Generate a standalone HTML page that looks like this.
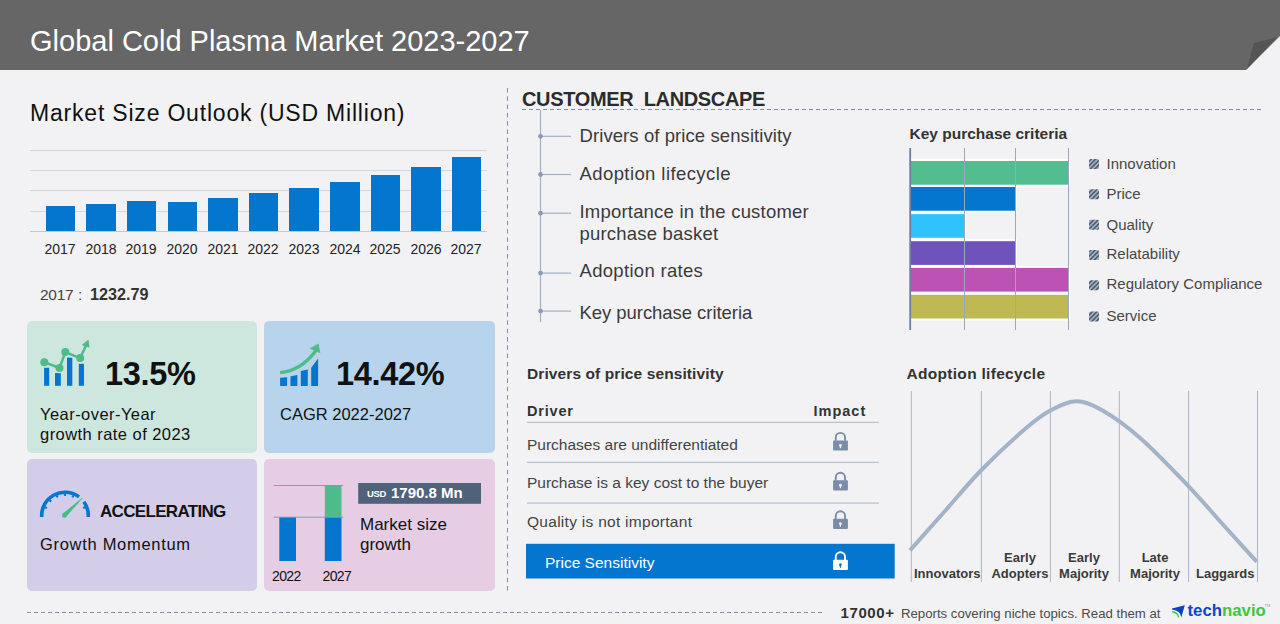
<!DOCTYPE html>
<html><head><meta charset="utf-8">
<style>
*{margin:0;padding:0;box-sizing:border-box}
html,body{width:1280px;height:624px;overflow:hidden;background:#f2f2f4;font-family:"Liberation Sans",sans-serif;color:#222}
.a{position:absolute;white-space:nowrap}
#hdr{position:absolute;left:0;top:0;width:1280px;height:70px}
.title{left:30px;top:23.5px;font-size:29px;color:#fff;line-height:34px;letter-spacing:0px}
.mso{left:30px;top:98.5px;font-size:23px;color:#111;line-height:28px;letter-spacing:0.8px}
.grid{position:absolute;left:30px;width:457px;height:1px;background:#d6d7dc}
.bar{position:absolute;background:#0476d0;width:29.5px}
.yr{position:absolute;top:241px;font-size:14px;color:#222;width:40px;text-align:center;line-height:16px}
.card{position:absolute;border-radius:5px}
.leg{left:1106.5px;font-size:15px;line-height:18px;color:#474747}
.row{left:527px;font-size:15.5px;line-height:18px;color:#444}
.lc{font-size:13px;line-height:16px;font-weight:bold;color:#3a3a3a}
</style></head><body>
<svg id="hdr" width="1280" height="70" viewBox="0 0 1280 70">
<polygon points="0,0 1280,0 1280,36 1246,70 0,70" fill="#666666"/>
<polygon points="1254,43 1277,37 1247,69" fill="#555555"/>
</svg>
<div class="a title">Global Cold Plasma Market 2023-2027</div>

<div class="a mso">Market Size Outlook (USD Million)</div>
<div class="grid" style="top:150px"></div>
<div class="grid" style="top:170px"></div>
<div class="grid" style="top:190px"></div>
<div class="grid" style="top:211px"></div>
<div class="grid" style="top:231px;background:#c4c6cc"></div>
<div class="bar" style="left:45.5px;top:206px;height:25px"></div>
<div class="bar" style="left:86px;top:203.5px;height:27.5px"></div>
<div class="bar" style="left:126.5px;top:200.5px;height:30.5px"></div>
<div class="bar" style="left:167.5px;top:201.5px;height:29.5px"></div>
<div class="bar" style="left:208px;top:197.5px;height:33.5px"></div>
<div class="bar" style="left:248.5px;top:193px;height:38px"></div>
<div class="bar" style="left:289px;top:188px;height:43px"></div>
<div class="bar" style="left:330px;top:182px;height:49px"></div>
<div class="bar" style="left:370.5px;top:175px;height:56px"></div>
<div class="bar" style="left:411px;top:166.5px;height:64.5px"></div>
<div class="bar" style="left:451.5px;top:156.5px;height:74.5px"></div>

<div class="yr" style="left:40px">2017</div>
<div class="yr" style="left:81px">2018</div>
<div class="yr" style="left:121px">2019</div>
<div class="yr" style="left:162px">2020</div>
<div class="yr" style="left:203px">2021</div>
<div class="yr" style="left:243px">2022</div>
<div class="yr" style="left:284px">2023</div>
<div class="yr" style="left:325px">2024</div>
<div class="yr" style="left:365px">2025</div>
<div class="yr" style="left:406px">2026</div>
<div class="yr" style="left:446px">2027</div>
<div class="a" style="left:40px;top:285.5px;font-size:15.5px;line-height:18px;letter-spacing:-0.3px;color:#444">2017</div>
<div class="a" style="left:78px;top:285.5px;font-size:15.5px;line-height:18px;color:#444">:</div>
<div class="a" style="left:90px;top:284.5px;font-size:16.2px;line-height:18px;font-weight:bold;color:#333">1232.79</div>

<div class="card" style="left:27px;top:321px;width:230px;height:131.5px;background:#cde6de"></div>
<div class="card" style="left:264px;top:321px;width:231px;height:131.5px;background:#b8d4ec"></div>
<div class="card" style="left:27px;top:459px;width:230px;height:131.5px;background:#d3cde9"></div>
<div class="card" style="left:264px;top:459px;width:231px;height:131.5px;background:#e6cde3"></div>

<svg class="a" style="left:0;top:0" width="520" height="624" viewBox="0 0 520 624">
 <g fill="#0476d0">
  <rect x="44.1" y="367.7" width="5.1" height="18.1"/>
  <rect x="55" y="373" width="5.8" height="12.8"/>
  <rect x="67" y="357.6" width="5.3" height="28.2"/>
  <rect x="78.8" y="363.8" width="5.2" height="22"/>
 </g>
 <polyline points="44.3,362.2 59.5,368 65.3,352.1 80.2,358.1 86,345.5" stroke="#cde6de" stroke-width="5" fill="none" stroke-linejoin="round"/>
 <g fill="#cde6de">
  <circle cx="44.3" cy="362.2" r="5.2"/><circle cx="59.5" cy="368" r="5.2"/>
  <circle cx="65.3" cy="352.1" r="5.2"/><circle cx="80.2" cy="358.1" r="5.2"/>
 </g>
 <polyline points="44.3,362.2 59.5,368 65.3,352.1 80.2,358.1 86,345.5" stroke="#4dbb8a" stroke-width="2.5" fill="none" stroke-linejoin="round"/>
 <g fill="#4dbb8a">
  <circle cx="44.3" cy="362.2" r="4"/><circle cx="59.5" cy="368" r="4"/>
  <circle cx="65.3" cy="352.1" r="4"/><circle cx="80.2" cy="358.1" r="4"/>
  <polygon points="88.5,339.6 89.5,347.8 81.8,345"/>
 </g>
 <g fill="#0476d0">
  <polygon points="280.1,377.8 287.1,377.3 287.1,385.9 280.1,385.9"/>
  <polygon points="290.5,376.3 297.4,374.9 297.4,385.9 290.5,385.9"/>
  <polygon points="300.8,371 307.8,369.6 307.8,385.9 300.8,385.9"/>
  <polygon points="311.2,367.7 318.1,358.6 318.1,385.9 311.2,385.9"/>
 </g>
 <path d="M280.1,372.6 C293,371.5 306,364 315.8,350.8" stroke="#4dbb8a" stroke-width="3.4" fill="none"/>
 <polygon points="318.6,343.5 320.3,353.3 309.6,348.6" fill="#4dbb8a"/>
 <!-- gauge -->
 <path d="M41.75,517.00 A23.3,23.3 0 0 1 79.02,496.89 M83.85,501.80 A23.3,23.3 0 0 1 88.25,517.00" stroke="#0476d0" stroke-width="3.6" fill="none"/>
 <g stroke="#0476d0" stroke-width="2.2"><line x1="44.86" y1="507.16" x2="46.89" y2="508.00"/><line x1="49.59" y1="500.09" x2="51.14" y2="501.64"/><line x1="56.66" y1="495.36" x2="57.50" y2="497.39"/><line x1="65.00" y1="493.70" x2="65.00" y2="495.90"/><line x1="73.34" y1="495.36" x2="72.50" y2="497.39"/><line x1="85.14" y1="507.16" x2="83.11" y2="508.00"/></g>
 <circle cx="64.3" cy="515.4" r="2.3" fill="#3fbf82"/>
 <polygon points="65.9,517.0 62.7,513.8 82.6,497.4 83.0,497.8" fill="#3fbf82"/>
 <!-- mini chart pink -->
 <line x1="273.7" y1="485.5" x2="343.4" y2="485.5" stroke="#8e9bb8" stroke-width="1"/>
 <rect x="279.3" y="517" width="16.7" height="44" fill="#0476d0"/>
 <rect x="324.8" y="517" width="16.7" height="44" fill="#0476d0"/>
 <rect x="324.8" y="485.5" width="16.7" height="31.5" fill="#4dbb8a"/>
 <line x1="273.7" y1="517.2" x2="343.4" y2="517.2" stroke="#8e9bb8" stroke-width="1"/>
 <rect x="358.2" y="483" width="122.8" height="20.8" fill="#4f6279"/>
</svg>
<div class="a" style="left:105px;top:355.5px;font-size:32.5px;line-height:36px;font-weight:bold;letter-spacing:-0.3px;color:#111">13.5%</div>
<div class="a" style="left:40px;top:404px;font-size:16.5px;line-height:20px;letter-spacing:0.45px;color:#111">Year-over-Year<br>growth rate of 2023</div>
<div class="a" style="left:336px;top:355.5px;font-size:32.5px;line-height:36px;font-weight:bold;letter-spacing:-0.3px;color:#111">14.42%</div>
<div class="a" style="left:280px;top:404px;font-size:16.5px;line-height:20px;color:#111">CAGR 2022-2027</div>
<div class="a" style="left:100px;top:502px;font-size:17px;line-height:20px;font-weight:bold;letter-spacing:-0.68px;color:#111">ACCELERATING</div>
<div class="a" style="left:40px;top:533.5px;font-size:16.5px;line-height:20px;letter-spacing:0.7px;color:#111">Growth Momentum</div>
<div class="a" style="left:272px;top:567.5px;font-size:14px;letter-spacing:-0.6px;line-height:16px;color:#111">2022</div>
<div class="a" style="left:322.5px;top:567.5px;font-size:14px;letter-spacing:-0.6px;line-height:16px;color:#111">2027</div>
<div class="a" style="left:367px;top:488px;font-size:9.5px;line-height:12px;color:#fff;font-weight:bold;letter-spacing:-0.3px">USD</div>
<div class="a" style="left:391px;top:484px;font-size:15px;line-height:18px;color:#fff;font-weight:bold">1790.8 Mn</div>
<div class="a" style="left:360px;top:515px;font-size:17px;line-height:20px;color:#111">Market size<br>growth</div>

<!-- dashed separators -->
<svg class="a" style="left:0;top:0" width="1280" height="624" viewBox="0 0 1280 624">
 <line x1="507.5" y1="88" x2="507.5" y2="592" stroke="#7d8fac" stroke-width="1" stroke-dasharray="4.5 3.8"/>
 <line x1="522" y1="109.5" x2="1262" y2="109.5" stroke="#7d8fac" stroke-width="1" stroke-dasharray="4 3"/>
 <line x1="27" y1="612.5" x2="822" y2="612.5" stroke="#7d8fac" stroke-width="1" stroke-dasharray="4 3"/>
 <!-- tree -->
 <line x1="540.5" y1="110" x2="540.5" y2="322" stroke="#a3b0c4" stroke-width="1.2"/>
 <g stroke="#a3b0c4" stroke-width="1.2">
  <line x1="540" y1="136.3" x2="571" y2="136.3"/>
  <line x1="540" y1="174.5" x2="571" y2="174.5"/>
  <line x1="540" y1="213.2" x2="571" y2="213.2"/>
  <line x1="540" y1="273.1" x2="571" y2="273.1"/>
  <line x1="540" y1="311.1" x2="571" y2="311.1"/>
 </g>
 <g fill="#8a9bb3">
  <circle cx="540.5" cy="136.3" r="2.4"/><circle cx="540.5" cy="174.5" r="2.4"/>
  <circle cx="540.5" cy="213.2" r="2.4"/><circle cx="540.5" cy="273.1" r="2.4"/>
  <circle cx="540.5" cy="311.1" r="2.4"/>
 </g>
 <!-- KPC bars -->
 <g>
 <rect x="910.5" y="159.0" width="159.6" height="27.7" fill="#ffffff"/>
 <rect x="910.5" y="185.0" width="106.5" height="27.7" fill="#ffffff"/>
 <rect x="910.5" y="212.1" width="55.6" height="27.7" fill="#ffffff"/>
 <rect x="910.5" y="239.2" width="106.5" height="27.7" fill="#ffffff"/>
 <rect x="910.5" y="265.9" width="159.6" height="27.7" fill="#ffffff"/>
 <rect x="910.5" y="292.8" width="159.6" height="27.7" fill="#ffffff"/>
 <rect x="910.5" y="161.0" width="157.6" height="23.7" fill="#52bd8f"/>
 <rect x="910.5" y="187.0" width="104.5" height="23.7" fill="#0476d0"/>
 <rect x="910.5" y="214.1" width="53.6" height="23.7" fill="#2ec4fb"/>
 <rect x="910.5" y="241.2" width="104.5" height="23.7" fill="#6f52bb"/>
 <rect x="910.5" y="267.9" width="157.6" height="23.7" fill="#bb52b4"/>
 <rect x="910.5" y="294.8" width="157.6" height="23.7" fill="#bfb954"/>
</g>
 <g stroke="#9aa8be" stroke-width="1">
  <line x1="964.5" y1="148" x2="964.5" y2="330"/>
  <line x1="1015.5" y1="148" x2="1015.5" y2="330"/>
  <line x1="1068.5" y1="148" x2="1068.5" y2="330"/>
 </g>
 <line x1="910.2" y1="148" x2="910.2" y2="330" stroke="#6d7f9c" stroke-width="1.8"/>
 <defs>
  <pattern id="hatch" width="3.2" height="3.2" patternUnits="userSpaceOnUse" patternTransform="rotate(45)">
   <rect width="3.2" height="3.2" fill="#a6b8d0"/><rect width="1.7" height="3.2" fill="#555d6b"/>
  </pattern>
 </defs>
 <g fill="url(#hatch)">
  <rect x="1089" y="159" width="10" height="10" rx="1.5"/>
  <rect x="1089" y="189.2" width="10" height="10" rx="1.5"/>
  <rect x="1089" y="219.8" width="10" height="10" rx="1.5"/>
  <rect x="1089" y="250" width="10" height="10" rx="1.5"/>
  <rect x="1089" y="280.3" width="10" height="10" rx="1.5"/>
  <rect x="1089" y="311.5" width="10" height="10" rx="1.5"/>
 </g>
 <!-- table lines -->
 <g stroke="#b7c3d3" stroke-width="1.2">
  <line x1="527" y1="422.3" x2="879" y2="422.3"/>
  <line x1="527" y1="462.4" x2="879" y2="462.4"/>
  <line x1="527" y1="503.1" x2="879" y2="503.1"/>
 </g>
 <rect x="526" y="543.8" width="368.7" height="34.7" fill="#0476d0"/>
 <defs>
  <g id="lock">
   <path d="M2.95,9 V5.7 A4.65,4.65 0 0 1 12.25,5.7 V9" fill="none" stroke-width="1.9"/>
   <rect x="0.3" y="8.6" width="14.8" height="10.2" rx="0.9" stroke="none"/>
  </g>
 </defs>
 <g fill="#7a8ca8" stroke="#7a8ca8">
  <use href="#lock" x="832.8" y="431.8"/>
  <use href="#lock" x="832.8" y="471.7"/>
  <use href="#lock" x="832.8" y="510.2"/>
 </g>
 <g fill="#ffffff" stroke="#ffffff"><use href="#lock" x="832.8" y="551.2"/></g>
 <g fill="#f2f2f4"><circle cx="840.4" cy="445.3" r="1.4"/><polygon points="839.7,445.6 841.1,445.6 841,448.3 839.8,448.3"/></g>
 <g fill="#f2f2f4"><circle cx="840.4" cy="485.2" r="1.4"/><polygon points="839.7,485.5 841.1,485.5 841,488.2 839.8,488.2"/></g>
 <g fill="#f2f2f4"><circle cx="840.4" cy="523.7" r="1.4"/><polygon points="839.7,524.0 841.1,524.0 841,526.7 839.8,526.7"/></g>
 <g fill="#0476d0"><circle cx="840.4" cy="564.7" r="1.4"/><polygon points="839.7,565.0 841.1,565.0 841,567.7 839.8,567.7"/></g>
 <!-- lifecycle -->
 <g stroke="#a9b5c8" stroke-width="1">
  <line x1="911.3" y1="391" x2="911.3" y2="582"/>
  <line x1="981.4" y1="391" x2="981.4" y2="582"/>
  <line x1="1050.4" y1="391" x2="1050.4" y2="582"/>
  <line x1="1119.3" y1="391" x2="1119.3" y2="582"/>
  <line x1="1188.6" y1="391" x2="1188.6" y2="582"/>
  <line x1="1257.5" y1="391" x2="1257.5" y2="582"/>
 </g>
 <path d="M910.0,550.4 C921.7,537.3 933.1,524.4 945.0,511.0 C956.9,497.6 968.0,483.8 981.4,470.0 C994.8,456.2 1014.1,438.4 1025.6,428.5 C1037.1,418.6 1042.0,415.0 1050.4,410.5 C1058.9,406.0 1067.6,401.3 1076.3,401.3 C1085.0,401.3 1091.8,404.3 1102.6,410.5 C1113.4,416.7 1126.7,426.1 1141.0,438.7 C1155.3,451.3 1175.1,472.2 1188.6,486.3 C1202.1,500.4 1210.7,510.9 1222.0,523.5 C1233.3,536.0 1245.1,548.9 1256.7,561.6" fill="none" stroke="#a3b3c8" stroke-width="4"/>
</svg>
<div class="a" style="left:522px;top:86.5px;font-size:20px;line-height:24px;font-weight:bold;letter-spacing:-0.35px;color:#2b2b2b">CUSTOMER&nbsp; LANDSCAPE</div>
<div class="a" style="left:579.5px;top:125px;font-size:18.5px;line-height:22px;letter-spacing:0.085px;color:#3a3a3a">Drivers of price sensitivity</div>
<div class="a" style="left:579.5px;top:163px;font-size:18.5px;line-height:22px;letter-spacing:0.41px;color:#3a3a3a">Adoption lifecycle</div>
<div class="a" style="left:579.5px;top:201px;font-size:18.5px;line-height:22px;letter-spacing:0.2px;color:#3a3a3a">Importance in the customer<br>purchase basket</div>
<div class="a" style="left:579.5px;top:260px;font-size:18.5px;line-height:22px;letter-spacing:0.31px;color:#3a3a3a">Adoption rates</div>
<div class="a" style="left:579.5px;top:302px;font-size:18.5px;line-height:22px;letter-spacing:-0.05px;color:#3a3a3a">Key purchase criteria</div>

<div class="a" style="left:909.5px;top:124.5px;font-size:15.5px;line-height:18px;font-weight:bold;color:#333">Key purchase criteria</div>
<div class="a leg" style="top:155.0px">Innovation</div>
<div class="a leg" style="top:185.0px">Price</div>
<div class="a leg" style="top:215.5px">Quality</div>
<div class="a leg" style="top:245.0px">Relatability</div>
<div class="a leg" style="top:275.0px">Regulatory Compliance</div>
<div class="a leg" style="top:307.0px">Service</div>

<div class="a" style="left:527px;top:365px;font-size:15.5px;line-height:18px;font-weight:bold;letter-spacing:0.1px;color:#333">Drivers of price sensitivity</div>
<div class="a" style="left:527px;top:402px;font-size:14.5px;line-height:18px;font-weight:bold;letter-spacing:0.8px;color:#333">Driver</div>
<div class="a" style="left:813.5px;top:401.5px;font-size:14.5px;line-height:18px;font-weight:bold;letter-spacing:1px;color:#333">Impact</div>
<div class="a row" style="top:436px">Purchases are undifferentiated</div>
<div class="a row" style="top:473.5px">Purchase is a key cost to the buyer</div>
<div class="a row" style="top:512.5px;letter-spacing:0.28px">Quality is not important</div>
<div class="a row" style="left:545px;top:553.5px;color:#fff">Price Sensitivity</div>

<div class="a" style="left:906.5px;top:365px;font-size:15.5px;line-height:18px;font-weight:bold;letter-spacing:0.3px;color:#333">Adoption lifecycle</div>
<div class="a lc" style="left:914px;top:566px">Innovators</div>
<div class="a lc" style="left:990px;top:550px;width:60px;text-align:center">Early<br>Adopters</div>
<div class="a lc" style="left:1054px;top:550px;width:60px;text-align:center">Early<br>Majority</div>
<div class="a lc" style="left:1125px;top:550px;width:60px;text-align:center">Late<br>Majority</div>
<div class="a lc" style="left:1196px;top:566px">Laggards</div>

<div class="a" style="left:840.5px;top:602.5px;font-size:15px;line-height:20px;font-weight:bold;letter-spacing:0.6px;color:#333">17000+</div>
<div class="a" style="left:901px;top:604.5px;font-size:13.2px;line-height:18px;color:#4a4a4a">Reports covering niche topics. Read them at</div>
<svg class="a" style="left:1166px;top:600px" width="22" height="22" viewBox="0 0 22 22">
 <path d="M6,8.4 L18.8,5.2 L15.3,17.4 Q14.6,10.8 6,9.6 Z" fill="#0c40c8"/>
 <path d="M6.1,10.9 Q12.6,11.4 13.3,17.4 L12,17.4 Q11,13 6.1,12.6 Z" fill="#2fd02f"/>
</svg>
<div class="a" style="left:1187.5px;top:600.5px;font-size:16.8px;line-height:20px;font-weight:bold;letter-spacing:0px;color:#1046c8">tech<span style="color:#3cc83c">navio</span></div><div class="a" style="left:1264.5px;top:602.5px;font-size:4px;line-height:5px;color:#999">TM</div>
</body></html>
